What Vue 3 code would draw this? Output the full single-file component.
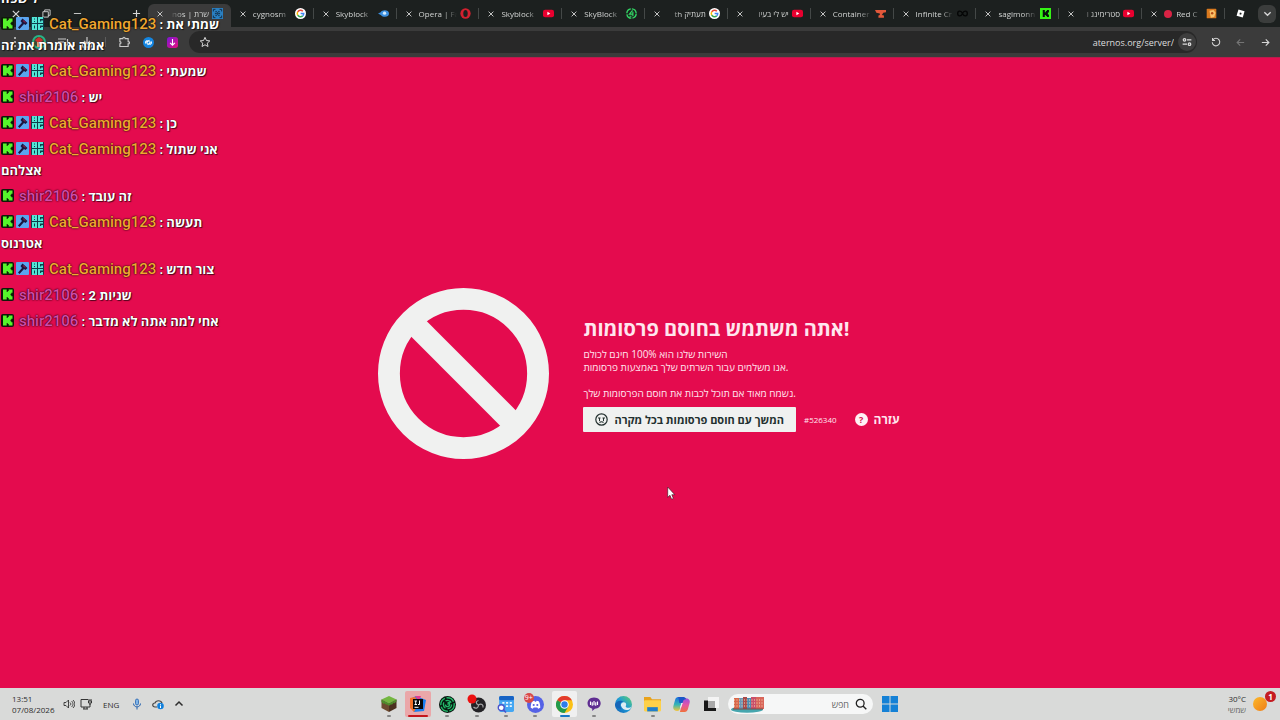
<template>
    <div class="desktop">
        <svg class="sprite" aria-hidden="true">
            <defs>
                <linearGradient id="g-copilot" x1="0" y1="0" x2="0" y2="1">
                    <stop offset="0" stop-color="#1b6fe0" />
                    <stop offset=".55" stop-color="#35b6b4" />
                    <stop offset="1" stop-color="#f2c53c" />
                </linearGradient>
                <linearGradient id="g-copilot-2" x1="0" y1="0" x2="0" y2="1">
                    <stop offset="0" stop-color="#9a4fe0" />
                    <stop offset=".5" stop-color="#e455a4" />
                    <stop offset="1" stop-color="#f0703c" />
                </linearGradient>
                <linearGradient id="g-edge" x1="0" y1="1" x2="1" y2="0">
                    <stop offset="0" stop-color="#0f5fb5" />
                    <stop offset=".5" stop-color="#1f9ad6" />
                    <stop offset="1" stop-color="#5fd36a" />
                </linearGradient>
                <linearGradient id="g-purple" x1="0" y1="0" x2="1" y2="1">
                    <stop offset="0" stop-color="#7a16d8" />
                    <stop offset="1" stop-color="#e8107c" />
                </linearGradient>
                <linearGradient id="g-sun" x1="0" y1="0" x2="1" y2="1">
                    <stop offset="0" stop-color="#fcb92c" />
                    <stop offset="1" stop-color="#ef7d17" />
                </linearGradient>
            </defs>
            <symbol id="i-aternos" viewBox="0 0 16 16">
                <rect width="16" height="16" fill="#2a7fc0" />
                <path d="M2 5V2h3M11 2h3v3M14 11v3h-3M5 14H2v-3M5 5h2M9 5h2M5 11h2M9 11h2M5 7v2M11 7v2M7 7h2v2H7z" fill="none" stroke="#12304a" stroke-width="1.4" />
            </symbol>
            <symbol id="i-google" viewBox="0 0 16 16">
                <circle cx="8" cy="8" r="8" fill="#fff" />
                <g fill="none" stroke-width="2.2">
                    <path d="M11.4 4.700A4.700 4.700 0 0 0 3.900 5.700" stroke="#ea4335" />
                    <path d="M3.900 5.700a4.700 4.700 0 0 0 0 4.600" stroke="#fbbc05" />
                    <path d="M3.900 10.300a4.700 4.700 0 0 0 7.300 1.100" stroke="#34a853" />
                    <path d="M11.200 11.400A4.700 4.700 0 0 0 12.700 8H8.200" stroke="#4285f4" />
                </g>
            </symbol>
            <symbol id="i-fish" viewBox="0 0 16 16">
                <path d="M0 8l4-2c2-4 12-4 12 2s-9 6-12 2z" fill="#3b8fdf" />
                <circle cx="9.500" cy="7.500" r="2.400" fill="#d4ecff" />
            </symbol>
            <symbol id="i-opera" viewBox="0 0 16 16">
                <ellipse cx="8" cy="8" rx="7.500" ry="7.500" fill="#d3202f" />
                <ellipse cx="8" cy="8" rx="3.200" ry="5.200" fill="#1c201f" />
            </symbol>
            <symbol id="i-youtube" viewBox="0 0 16 16">
                <rect y="2.400" width="16" height="11.200" rx="3" fill="#e8002f" />
                <path d="M6.400 5.600v4.800L10.600 8z" fill="#fff" />
            </symbol>
            <symbol id="i-hypixel" viewBox="0 0 16 16">
                <circle cx="8" cy="8" r="6.800" fill="none" stroke="#32d765" stroke-width="2" stroke-dasharray="9 1.600" />
                <path d="M9.500 3.500L5 9h5M10 5.500v6.500M5 12h3" fill="none" stroke="#32d765" stroke-width="1.700" />
            </symbol>
            <symbol id="i-anvil" viewBox="0 0 16 16">
                <path d="M0 3h16v3l-4 1-2 3 3 1v3H5v-3l2-1V8L2 7z" fill="#e2573a" />
            </symbol>
            <symbol id="i-loop" viewBox="0 0 16 16">
                <path d="M8 8c-2-5-7-4-7 0s5 5 7 0 7-4 7 0-5 5-7 0z" fill="none" stroke="#050606" stroke-width="2" />
            </symbol>
            <symbol id="i-kick" viewBox="0 0 16 16">
                <rect width="16" height="16" fill="#35f315" />
                <path d="M4 3h3v3h1.500V4.500H10V3h3v3.500h-1.500V9.500H13V13h-3v-1.500H8.500V10H7v3H4z" fill="#07120a" />
            </symbol>
            <symbol id="i-cookie" viewBox="0 0 16 16">
                <rect x="1" y="1" width="14" height="14" rx="1" fill="#d9791e" />
                <path d="M5 4l6-1 3 4-2 6-5 1z" fill="#f9c169" />
                <circle cx="9" cy="7.500" r="1.800" fill="#b64d16" />
            </symbol>
            <symbol id="i-roblox" viewBox="0 0 16 16">
                <path d="M4.400 1l10.800 3.200L12 15 1 11.800z" fill="#fff" />
                <path d="M7 6.200l3 .9-.9 3-3-.9z" fill="#1c201f" />
            </symbol>
            <symbol id="i-puzzle" viewBox="0 0 16 16">
                <path d="M2.500 3.500h4c0-2.400 3-2.400 3 0h4v4c2.400 0 2.400 3 0 3v3.500h-11v-3.500c2 0 2-3 0-3z" fill="none" stroke="#c9c9c9" stroke-width="1.500" />
            </symbol>
            <symbol id="i-shazam" viewBox="0 0 16 16">
                <circle cx="8" cy="8" r="8" fill="#1485e0" />
                <path d="M9.500 4.500L6.500 6.500c-2 1.500 0 3 1 2.500M6.500 11.500l3-2c2-1.500 0-3-1-2.500M4.500 9.500c-2-2 0-4 2-4.500M11.500 6.500c2 2 0 4-2 4.500" fill="none" stroke="#fff" stroke-width="1.500" />
            </symbol>
            <symbol id="i-save" viewBox="0 0 16 16">
                <rect width="16" height="16" rx="4" fill="url(#g-purple)" />
                <path d="M8 3v9M4.500 8.500L8 12l3.500-3.500" fill="none" stroke="#fff" stroke-width="1.600" />
            </symbol>
            <symbol id="i-star" viewBox="0 0 16 16">
                <path d="M8 1.800l1.900 4.200 4.500.5-3.400 3 1 4.500L8 11.700 4 14l1-4.500-3.400-3 4.500-.5z" fill="none" stroke="#d8d8d8" stroke-width="1.300" />
            </symbol>
            <symbol id="i-tune" viewBox="0 0 16 16">
                <g fill="none" stroke="#dcdcdc" stroke-width="2">
                    <circle cx="4" cy="4.500" r="2" />
                    <circle cx="12" cy="11.500" r="2" />
                    <path d="M8 4.500h7M1 11.500h7" />
                </g>
            </symbol>
            <symbol id="i-reload" viewBox="0 0 16 16">
                <path d="M3.200 4.500A6 6 0 1 1 2 8.500M2.500 1.500v4h4" fill="none" stroke="#d6d6d6" stroke-width="1.700" />
            </symbol>
            <symbol id="i-arrow" viewBox="0 0 16 16">
                <path d="M1.500 8h12.500M8.500 2.500L14 8l-5.500 5.500" fill="none" stroke="currentColor" stroke-width="2" />
            </symbol>
            <symbol id="i-x" viewBox="0 0 10 10">
                <path d="M1 1l8 8M9 1L1 9" fill="none" stroke="currentColor" stroke-width="1.500" />
            </symbol>
            <symbol id="i-chevron" viewBox="0 0 10 10">
                <path d="M1.500 3.500L5 7l3.500-3.500" fill="none" stroke="currentColor" stroke-width="1.500" />
            </symbol>

            <!-- chat badges -->
            <symbol id="b-kick" viewBox="0 0 13 13">
                <rect width="13" height="13" rx="2" fill="#0d1a08" />
                <path d="M2 1.500h3.700v2.500h1V3h1V1.500H11.500v3.300h-1.200v1H9.500v1.400h.8v1h1.200v3.300H7.700V10h-1V9h-1v2.500H2z" fill="#57f52b" />
            </symbol>
            <symbol id="b-mod" viewBox="0 0 13 13">
                <rect width="13" height="13" rx="1" fill="#5aa5ef" />
                <path d="M6.500 1.500l5 4.500-2 2-1.500-1-4.500 5L2 10.500 6 6 4.500 4z" fill="#1c1740" />
                <path d="M7 3.500l2.500 2" stroke="#7c1e4c" stroke-width="1.200" />
            </symbol>
            <symbol id="b-og" viewBox="0 0 13 13">
                <rect width="13" height="13" rx="1" fill="#0f3d4c" />
                <path d="M1 0h5v6H1zM3 1.500v1h1v-1zM3 4v1h1V4zM7 0h5v2H9v2.500h1.200v-1H12V6H7zM1 7h5v6H1zM3 8.500v3h1v-3zM7 7h5v1.500H9V11h1.200v-1H12v3H7z" fill="#52e6d6" fill-rule="evenodd" />
            </symbol>

            <!-- taskbar apps -->
            <symbol id="a-minecraft" viewBox="0 0 16 16">
                <path d="M8 0l7.500 3.500L8 7.500.5 3.500z" fill="#74b741" />
                <path d="M.5 3.500L8 7.500V16L.5 12z" fill="#6d4a30" />
                <path d="M15.500 3.500L8 7.500V16l7.500-4z" fill="#4b3020" />
                <path d="M.5 3.500L8 7.500v2.300L5.500 8v1L3 7v1.200L.5 6zM15.500 3.500L8 7.500v2.300L10.500 8v1L13 6.500v1l2.500-2z" fill="#4d8d2b" />
            </symbol>
            <symbol id="a-idea" viewBox="0 0 16 16">
                <path d="M0 3l6-3 10 4-2 11-10 1-4-6z" fill="#1a7ff0" />
                <path d="M0 2l5-1 4 5-5 10-4-4z" fill="#f5722b" />
                <path d="M5 0h6L9 5z" fill="#e53a95" />
                <rect x="3" y="3" width="10" height="10" fill="#0a0a0a" />
                <path d="M4.500 5H7M5.700 5v3.500M4.500 8.500H7M9.500 4.500v4H8M4.500 11.300h4" fill="none" stroke="#fff" stroke-width="1" />
            </symbol>
            <symbol id="a-radar" viewBox="0 0 16 16">
                <circle cx="8" cy="8" r="8" fill="#06170f" />
                <g fill="none" stroke="#23b768" stroke-width="1.300">
                    <circle cx="8" cy="8" r="6.300" stroke-dasharray="8 1.500" />
                    <circle cx="8" cy="8" r="3.900" stroke-dasharray="6 2" />
                    <path d="M8 8l3-3M6 8a2 2 0 1 0 2-2" />
                </g>
            </symbol>
            <symbol id="a-obs" viewBox="0 0 20 20">
                <circle cx="11.500" cy="11" r="7.500" fill="#242326" />
                <path d="M11.500 11c-3-1-3-4 0-4.500M11.500 11c3-2 5 0 4.500 2.500M11.500 11c0 3.500-3 4-5 2" fill="none" stroke="#a7a7a9" stroke-width="1.200" />
                <circle cx="5" cy="5" r="4.500" fill="#ec1010" />
            </symbol>
            <symbol id="a-calendar" viewBox="0 0 16 16">
                <rect x="2" width="14" height="15" rx="1.500" fill="#44a7f3" />
                <rect x="2" width="14" height="4" rx="1.500" fill="#1763c4" />
                <path d="M5 6.500h2M8.500 6.500h2M12 6.500h2M8.500 9.500h2M12 9.500h2" stroke="#e9f6ff" stroke-width="1.700" />
                <circle cx="4" cy="11" r="2.800" fill="#fff" stroke="#4a55cc" stroke-width="1.300" />
                <path d="M6 13l2.500 2.500" stroke="#4a55cc" stroke-width="1.500" />
            </symbol>
            <symbol id="a-discord" viewBox="0 0 16 16">
                <circle cx="8" cy="8" r="8" fill="#5562e6" />
                <path d="M3.500 11c0-3 .7-5 1.500-6l2-.5.5.8h1l.5-.8 2 .5c.8 1 1.500 3 1.500 6l-2 1-.8-1.200H6.300L5.500 12z" fill="#fff" />
                <circle cx="6.300" cy="8.500" r="1" fill="#5562e6" />
                <circle cx="9.700" cy="8.500" r="1" fill="#5562e6" />
            </symbol>
            <symbol id="a-chrome" viewBox="0 0 16 16">
                <circle cx="8" cy="8" r="8" fill="#fbc116" />
                <path d="M8 8L1.070 4A8 8 0 0 1 14.930 4z" fill="#e33b2e" />
                <path d="M8 8L1.070 4A8 8 0 0 0 8 16l3.500-6z" fill="#229a4c" />
                <path d="M8 4h6.930L11.500 10z" fill="#fbc116" />
                <circle cx="8" cy="8" r="4" fill="#fff" />
                <circle cx="8" cy="8" r="3" fill="#2f7de9" />
            </symbol>
            <symbol id="a-voice" viewBox="0 0 16 16">
                <path d="M8 .5c10 0 10 13 1 13L6 16v-2.700C-2 12-1 .5 8 .5z" fill="#5f2d91" />
                <path d="M4 5v4M6 6v4M8 4.500v5M10 6v4M12 5v4" stroke="#fff" stroke-width="1.300" />
            </symbol>
            <symbol id="a-edge" viewBox="0 0 16 16">
                <circle cx="8" cy="8" r="8" fill="url(#g-edge)" />
                <path d="M5.500 9c0-4 5-4 5-1 0 1.500-1 1.500 0 2.500 1.500 1 4 .5 5-.5-1 4-8 5-10-1z" fill="#dcecf4" />
                <path d="M0 8c1-4 6-4.500 8-2.500-3 0-4 3-2 6.500-3 0-6-1-6-4z" fill="#1566b8" />
            </symbol>
            <symbol id="a-folder" viewBox="0 0 16 16">
                <path d="M0 1h6l1.500 2H16v10H0z" fill="#e9a21b" />
                <rect y="4" width="16" height="10.500" rx="1" fill="#fdd14a" />
                <path d="M3 14.500v-4h10v4z" fill="#1f7fcb" />
            </symbol>
            <symbol id="a-copilot" viewBox="0 0 16 16">
                <path d="M5 1h4.500L6.500 12c-.5 1.500-1 2-2.500 2-3 0-4.500-2-3.500-5L2 3.500C2.500 2 3.500 1 5 1z" fill="url(#g-copilot)" />
                <path d="M11 15H6.500l3-11c.5-1.500 1-2 2.500-2 3 0 4.500 2 3.500 5L14 12.500c-.5 1.500-1.500 2.500-3 2.500z" fill="url(#g-copilot-2)" />
                <path d="M5 1h5c1.300 0 2 1 2.300 2-1.500 0-2.300.5-2.800 2L9 6.500H6z" fill="#1c56c8" />
                <path d="M9.200 6.500L7.500 11h-1L8 6.500z" fill="#eef2f5" />
            </symbol>
            <symbol id="a-taskview" viewBox="0 0 16 16">
                <rect x="5" y="1" width="11" height="11" fill="#f4f4f4" />
                <path d="M1 4.500h4V12h8v3H1z" fill="#171717" />
                <rect x="5" y="5" width="7" height="7" fill="#a9a9a9" />
            </symbol>
            <symbol id="a-windows" viewBox="0 0 16 16">
                <path d="M0 0h7.500v7.500H0zM8.500 0H16v7.500H8.500zM0 8.500h7.500V16H0zM8.500 8.500H16V16H8.500z" fill="#1581d6" />
            </symbol>
        </svg>

        <header class="browser">
            <div class="tab-strip">
                <div class="window-buttons">
                    <button aria-label="Close window"><svg width="8" height="8"><use href="#i-x" /></svg></button>
                    <button aria-label="Restore"><svg width="9" height="9" viewBox="0 0 10 10"><path d="M1 3h6v6H1zM3 3V1h6v6H7" fill="none" stroke="currentColor" /></svg></button>
                    <button aria-label="Minimize"><svg width="9" height="9" viewBox="0 0 10 10"><path d="M1 5h8" stroke="currentColor" /></svg></button>
                </div>
                <button class="new-tab" aria-label="New tab"><svg width="9" height="9" viewBox="0 0 10 10"><path d="M5 1v8M1 5h8" stroke="currentColor" stroke-width="1.300" /></svg></button>
                <nav class="tabs">
                    <div v-for="(tab, i) in tabs" :key="i" class="tab" :class="{ active: i === 0, hebrew: tab.rtl }">
                        <button class="tab-close" aria-label="Close tab"><svg width="6" height="6"><use href="#i-x" /></svg></button>
                        <span class="tab-title" :dir="tab.rtl ? 'rtl' : 'ltr'"><i v-if="tab.dot" class="dot"></i>{{ tab.title }}</span>
                        <svg class="favicon"><use :href="'#i-' + tab.icon" /></svg>
                    </div>
                </nav>
                <svg class="pinned"><use href="#i-roblox" /></svg>
                <button class="tab-search" aria-label="Search tabs"><svg width="9" height="9"><use href="#i-chevron" /></svg></button>
            </div>
            <div class="toolbar">
                <div class="tools">
                    <button aria-label="Menu"><svg width="12" height="12" viewBox="0 0 12 12"><path d="M6 1v2M6 5v2M6 9v2" stroke="#d0d0d0" stroke-width="1.500" /></svg></button>
                    <button aria-label="Profile"><svg width="14" height="14" viewBox="0 0 14 14"><circle cx="7" cy="7" r="7" fill="#28b487" /><circle cx="7" cy="7" r="5" fill="#3b4a35" /><path d="M3 5l4-3 4 3-2 2H5z" fill="#cf3030" /><path d="M5 7h4v5H5z" fill="#e0a070" /></svg></button>
                    <button aria-label="Media"><svg width="12" height="12" viewBox="0 0 12 12"><path d="M1 3h8M1 6h6M1 9h4M10.500 3v6" fill="none" stroke="#c9c9c9" stroke-width="1.200" /><circle cx="9.500" cy="9" r="1.300" fill="#c9c9c9" /></svg></button>
                    <button aria-label="Downloads"><svg width="12" height="12" viewBox="0 0 12 12"><path d="M6 1v7M3 5l3 3 3-3M1.500 8v3h9V8" fill="none" stroke="#c9c9c9" stroke-width="1.200" /></svg></button>
                    <span class="tool-line"></span>
                    <button aria-label="Extensions"><svg width="12" height="12"><use href="#i-puzzle" /></svg></button>
                    <button aria-label="Shazam"><svg width="11" height="11"><use href="#i-shazam" /></svg></button>
                    <button aria-label="Download video"><svg width="11" height="11"><use href="#i-save" /></svg></button>
                </div>
                <div class="address">
                    <button aria-label="Bookmark"><svg width="12" height="12"><use href="#i-star" /></svg></button>
                    <input v-model="url" type="text" aria-label="Address">
                    <button class="site-info" aria-label="Site information"><svg width="10" height="10"><use href="#i-tune" /></svg></button>
                </div>
                <div class="history">
                    <button aria-label="Reload"><svg width="10" height="10"><use href="#i-reload" /></svg></button>
                    <button class="dim" aria-label="Forward"><svg class="flip" width="9" height="9"><use href="#i-arrow" /></svg></button>
                    <button aria-label="Back"><svg width="9" height="9"><use href="#i-arrow" /></svg></button>
                </div>
            </div>
        </header>

        <main class="page">
            <svg class="ban" viewBox="0 0 172 172" aria-hidden="true">
                <circle cx="86" cy="86" r="75" fill="none" stroke="#f0f1f0" stroke-width="22" />
                <path d="M33 33l106 106" stroke="#f0f1f0" stroke-width="22" />
            </svg>
            <section class="notice">
                <h1>אתה משתמש בחוסם פרסומות!</h1>
                <p>השירות שלנו הוא 100% חינם לכולם<br>אנו משלמים עבור השרתים שלך באמצעות פרסומות.</p>
                <p>נשמח מאוד אם תוכל לכבות את חוסם הפרסומות שלך.</p>
                <div class="actions">
                    <button class="continue">
                        <svg width="13" height="13" viewBox="0 0 13 13"><g fill="none" stroke="#23302f" stroke-width="1.200"><circle cx="6.500" cy="6.500" r="5.700" /><path d="M4.500 9.500c1-1 3-1 4 0M3 5h2.500M7.500 5h2.500" /></g><path d="M4 5h1v3H4zM8 5h1v3H8z" fill="#23302f" /></svg>
                        <span>המשך עם חוסם פרסומות בכל מקרה</span>
                    </button>
                    <span class="code">#526340</span>
                    <a class="help" href="#help"><span class="mark">?</span><span>עזרה</span></a>
                </div>
            </section>
            <svg class="pointer" viewBox="0 0 9 14" aria-hidden="true">
                <path d="M.7 1v10.300l2.300-2 1.600 3.900 1.800-.8-1.600-3.700h3z" fill="#fff" stroke="#35101d" stroke-width=".6" />
            </svg>
        </main>

        <footer class="taskbar">
            <div class="tray">
                <div class="clock"><span>13:51</span><span>07/08/2026</span></div>
                <svg width="12" height="12" viewBox="0 0 12 12"><path d="M1 4.500h2L5.500 2v8L3 7.500H1zM7 4.500c1 1 1 2 0 3M8.500 3c2 2 2 4 0 6M10 2c2.500 2.500 2.500 5.500 0 8" fill="none" stroke="#333" stroke-width=".9" /></svg>
                <svg class="net" width="12" height="12" viewBox="0 0 12 12"><path d="M8 1.500H1v7.500h9V6M3 11h5M4 9v2M7 9v2M9 1v2M11 1v2M8.500 3h3v2h-3zM10 5v2" fill="none" stroke="#333" stroke-width="1" /></svg>
                <span class="lang">ENG</span>
                <svg class="mic" width="10" height="12" viewBox="0 0 10 12"><rect x="3.500" y="1" width="3" height="6" rx="1.500" fill="#7fb4e8" stroke="#2563b0" stroke-width=".8" /><path d="M1.500 5.500c0 4.500 7 4.500 7 0M5 9v2.500" fill="none" stroke="#2563b0" /></svg>
                <svg class="cloud" width="12" height="12" viewBox="0 0 12 12"><path d="M5 9H3C0 9 0 5 3 5c1-3 6-3 7 0" fill="none" stroke="#444" stroke-width="1.200" /><circle cx="8.500" cy="8" r="3.300" fill="#1180dc" /><path d="M8.500 6v.8M8.500 7.500V10" stroke="#fff" /></svg>
                <svg class="more" width="10" height="10"><use href="#i-chevron" /></svg>
            </div>
            <div class="dock">
                <div class="apps">
                    <button v-for="app in apps" :key="app.icon" class="app" :class="app.state" :aria-label="app.icon">
                        <svg class="app-icon" :width="app.size || 17" :height="app.size || 17"><use :href="'#a-' + app.icon" /></svg>
                        <span v-if="app.badge" class="count" v-text="app.badge"></span>
                    </button>
                </div>
                <label class="search">
                    <svg class="houses" viewBox="0 0 36 18" aria-hidden="true">
                        <ellipse cx="18" cy="14.500" rx="16" ry="3.200" fill="#46a6ae" />
                        <path d="M5 3h5v11H5z" fill="#d8674a" /><path d="M10 3h4v11h-4z" fill="#6c96b5" /><path d="M14 2h4v12h-4z" fill="#a84a4a" />
                        <path d="M18 3h4v11h-4z" fill="#4d8db3" /><path d="M22 2h5v12h-5z" fill="#c9506a" /><path d="M27 2h8v12h-8z" fill="#d9665a" />
                        <path d="M5 5h30M5 8h30M5 11h30" stroke="#f4d9b8" stroke-width="1" stroke-dasharray="1 1.500" />
                        <path d="M4 14h30" stroke="#704a48" stroke-width="1" />
                    </svg>
                    <input type="text" dir="rtl" placeholder="חפש" aria-label="חפש">
                    <svg width="12" height="12" viewBox="0 0 12 12"><circle cx="5.200" cy="5.200" r="3.900" fill="none" stroke="#222" stroke-width="1.300" /><path d="M8 8l3.300 3.300" stroke="#222" stroke-width="1.400" /></svg>
                </label>
                <button class="start" aria-label="Start"><svg width="16" height="16"><use href="#a-windows" /></svg></button>
            </div>
            <div class="weather">
                <div class="forecast"><span>30°C</span><span class="sky">שמשי</span></div>
                <svg width="24" height="20" viewBox="0 0 24 20"><circle cx="8" cy="10" r="7" fill="url(#g-sun)" /></svg>
                <span class="alert">1</span>
            </div>
        </footer>

        <aside class="chat">
            <p v-for="(msg, i) in messages" :key="i" class="message">
                <template v-if="msg.user">
                    <span class="badges">
                        <svg v-for="badge in users[msg.user].badges" :key="badge" width="13" height="13"><use :href="'#b-' + badge" /></svg>
                    </span>
                    <span class="name" :class="msg.user" v-text="users[msg.user].name"></span>
                    <span class="body" v-text="' : ' + msg.text"></span>
                </template>
                <span v-if="msg.rest" class="body rest" v-text="msg.rest"></span>
            </p>
        </aside>
    </div>
</template>



<script setup>
import { ref } from 'vue';

const url = ref('aternos.org/server/');

/* tabs */
const tabs = [
    { title: 'שרת | nos', icon: 'aternos', rtl: true },
    { title: 'cygnosm', icon: 'google' },
    { title: 'Skyblock', icon: 'fish' },
    { title: 'Opera | Fa', icon: 'opera' },
    { title: 'Skyblock', icon: 'youtube' },
    { title: 'SkyBlock', icon: 'hypixel' },
    { title: 'תעתיק th', icon: 'google', rtl: true },
    { title: 'יש לי בעיו', icon: 'youtube', rtl: true },
    { title: 'Container', icon: 'anvil' },
    { title: 'Infinite Cr', icon: 'loop' },
    { title: 'sagimonn', icon: 'kick' },
    { title: 'סטרימינג ו', icon: 'youtube', rtl: true },
    { title: 'Red C', icon: 'cookie', dot: true },
];

/* chat */
const users = {
    cat: { name: 'Cat_Gaming123', badges: ['kick', 'mod', 'og'] },
    shir: { name: 'shir2106', badges: ['kick'] },
};

const messages = [
    { rest: 'ל שפה' },
    { user: 'cat', text: 'שמתי את', rest: 'אמה אומרת את זה' },
    { user: 'cat', text: 'שמעתי' },
    { user: 'shir', text: 'יש' },
    { user: 'cat', text: 'כן' },
    { user: 'cat', text: 'אני שתול', rest: 'אצלהם' },
    { user: 'shir', text: 'זה עובד' },
    { user: 'cat', text: 'תעשה', rest: 'אטרנוס' },
    { user: 'cat', text: 'צור חדש' },
    { user: 'shir', text: '2 שניות' },
    { user: 'shir', text: 'אחי למה אתה לא מדבר' },
];

/* taskbar */
const apps = [
    { icon: 'minecraft', state: 'running', size: 16 },
    { icon: 'idea', state: 'alerting', size: 16 },
    { icon: 'radar', state: 'running' },
    { icon: 'obs', state: 'running', size: 20 },
    { icon: 'calendar', state: 'running' },
    { icon: 'discord', state: 'running', badge: '9+' },
    { icon: 'chrome', state: 'focused' },
    { icon: 'voice', state: 'running', size: 14 },
    { icon: 'edge' },
    { icon: 'folder', state: 'running' },
    { icon: 'copilot' },
    { icon: 'taskview', size: 16 },
];
</script>



<style>
body {
    margin: 0;
    background: #e40b4e;
}
</style>

<style scoped>
.desktop {
    position: relative;
    display: flex;
    flex-direction: column;
    min-height: 100vh;
    overflow: hidden;
    font-family: "Open Sans", "Noto Sans", sans-serif;
}

.sprite {
    position: absolute;
    width: 0;
    height: 0;
}

svg {
    display: block;
    flex: none;
}

button {
    display: flex;
    align-items: center;
    justify-content: center;
    padding: 0;
    border: 0;
    background: none;
    color: #d6d6d6;
    font: inherit;
}

input {
    min-width: 0;
    padding: 0;
    border: 0;
    outline: 0;
    background: none;
    font: inherit;
}

/* browser */
.tab-strip {
    display: flex;
    align-items: center;
    height: 27px;
    background: #1c201f;
}

.window-buttons {
    display: flex;
}

.window-buttons button {
    width: 31px;
    height: 27px;
}

.new-tab {
    width: 24px;
    margin-left: 31px;
}

.tabs {
    display: flex;
    flex: 1;
    min-width: 0;
    align-self: stretch;
    padding-top: 4px;
}

.tab {
    display: flex;
    flex: 1;
    align-items: center;
    min-width: 0;
    height: 11px;
    margin-top: 4px;
    padding: 0 7px 0 9px;
    border-right: 1px solid #444847;
    box-sizing: border-box;
}

.tab.active {
    height: 23px;
    margin: 0;
    padding-bottom: 4px;
    border-radius: 6px 6px 0 0;
    border-color: #3b3b3b;
    background: #3b3b3b;
}

.tab-close {
    width: 6px;
    margin-right: 7px;
}

.tab-title {
    flex: 1;
    min-width: 0;
    overflow: hidden;
    color: #d2d4d3;
    font-size: 8px;
    line-height: 12px;
    white-space: nowrap;
    mask-image: linear-gradient(to right, #000 65%, transparent);
}

.hebrew .tab-title {
    mask-image: linear-gradient(to left, #000 65%, transparent);
}

.dot {
    display: inline-block;
    width: 8px;
    height: 8px;
    margin-right: 4px;
    border-radius: 50%;
    background: #d92344;
    vertical-align: -1px;
}

.favicon {
    width: 11px;
    height: 11px;
    margin-left: 3px;
}

.pinned {
    width: 9px;
    height: 9px;
    margin: 0 13px 0 11px;
}

.tab-search {
    width: 18px;
    height: 18px;
    margin-right: 4px;
    border-radius: 6px;
    background: #3b3d3c;
}

.toolbar {
    display: flex;
    align-items: center;
    height: 30px;
    background: #3b3b3b;
}

.tools {
    display: flex;
    align-items: center;
    padding: 0 5px 0 3px;
}

.tools button {
    width: 24px;
}

.tool-line {
    width: 1px;
    height: 10px;
    margin: 0 6px;
    background: #5c5c5c;
}

.address {
    display: flex;
    flex: 1;
    align-items: center;
    height: 22px;
    padding: 0 1px 0 10px;
    border-radius: 11px;
    background: #282828;
}

.address input {
    flex: 1;
    margin: 0 4px;
    color: #dedede;
    font-size: 9px;
    text-align: right;
}

.site-info {
    width: 18px;
    height: 18px;
    border-radius: 9px;
    background: #3e3e3e;
}

.history {
    display: flex;
    padding: 0 2px 0 6px;
}

.history button {
    width: 25px;
}

.history .dim {
    color: #747474;
}

.flip {
    transform: scaleX(-1);
}

/* page */
.page {
    position: relative;
    display: flex;
    flex: 1;
    align-items: center;
    justify-content: center;
    gap: 34px;
    padding-right: 2px;
    border-top: 1px solid #b81c4c;
    background: #e40b4e;
    color: #ffe6ee;
}

.ban {
    width: 171px;
    height: 171px;
}

h1 {
    margin: 0 0 6px;
    font-size: 20px;
    line-height: 27px;
    font-weight: 700;
}

.notice p {
    margin: 0 0 13px;
    font-size: 10px;
    line-height: 13px;
}

.notice .actions {
    display: flex;
    align-items: center;
    margin-top: -6px;
}

.continue {
    gap: 6px;
    height: 25px;
    padding: 0 12px;
    border-radius: 1px;
    background: #f0f1f0;
    color: #23302f;
    font-size: 11px;
    font-weight: 700;
}

.code {
    margin: 0 18px 0 8px;
    font-size: 8px;
}

.help {
    display: flex;
    align-items: center;
    gap: 6px;
    color: #ffe6ee;
    font-size: 12px;
    font-weight: 700;
    text-decoration: none;
}

.mark {
    width: 13px;
    border-radius: 50%;
    background: #fff0f4;
    color: #d60d4b;
    font-size: 9px;
    line-height: 13px;
    text-align: center;
}

.pointer {
    position: absolute;
    top: 428px;
    left: 667px;
    width: 9px;
    height: 14px;
}

/* taskbar */
.taskbar {
    display: grid;
    grid-template-columns: 1fr auto 1fr;
    align-items: center;
    height: 32px;
    padding-right: 8px;
    background: #d9dad9;
    color: #2d2d2d;
    font-size: 8px;
    line-height: 11px;
}

.tray {
    display: flex;
    align-items: center;
    padding-left: 12px;
}

.clock {
    display: flex;
    flex-direction: column;
    width: 51px;
}

.net {
    margin-left: 5px;
}

.lang {
    margin: 0 13px 0 11px;
}

.cloud {
    margin: 0 10px;
}

.more {
    transform: rotate(180deg);
}

.dock {
    display: flex;
    align-items: center;
}

.apps {
    display: flex;
    width: 352px;
}

.app {
    position: relative;
    flex: 1;
    height: 32px;
}

.app-icon {
    position: relative;
}

/* tile behind the active app */
.alerting::before,
.focused::before {
    content: "";
    position: absolute;
    inset: 3px 2px;
    border-radius: 2px;
    background: #f0f0f0;
}

.alerting::before {
    background: #eaa7a9;
}

/* line under the open apps */
.running::after,
.alerting::after,
.focused::after {
    content: "";
    position: absolute;
    bottom: 3px;
    left: 50%;
    width: 4px;
    height: 2px;
    margin-left: -2px;
    border-radius: 1px;
    background: #858585;
}

.focused::after {
    width: 10px;
    margin-left: -5px;
    background: #1a76c6;
}

.alerting::after {
    width: 20px;
    margin-left: -10px;
    background: #c4161c;
}

.count {
    position: absolute;
    top: 5px;
    left: 3px;
    width: 10px;
    border-radius: 5px;
    background: #d94848;
    color: #fff;
    font-size: 7px;
    line-height: 10px;
}

.search {
    display: flex;
    align-items: center;
    width: 145px;
    height: 20px;
    box-sizing: border-box;
    margin: 0 9px 0 2px;
    padding: 0 6px 0 1px;
    border-radius: 10px;
    background: #f6f7f7;
}

.houses {
    width: 36px;
    height: 18px;
}

.search input {
    flex: 1;
    margin-right: 6px;
    font-size: 9px;
}

.search input::placeholder {
    color: #666;
    opacity: 1;
}

.weather {
    position: relative;
    display: flex;
    align-items: center;
    justify-content: flex-end;
    gap: 6px;
    margin-right: -4px;
}

.forecast {
    display: flex;
    flex-direction: column;
    align-items: flex-end;
}

.sky {
    color: #666;
}

.alert {
    position: absolute;
    top: -2px;
    right: 0;
    width: 11px;
    border-radius: 6px;
    background: #c41c22;
    color: #fff;
    font-weight: 700;
    text-align: center;
}

/* chat over the browser */
.chat {
    position: absolute;
    top: 0;
    left: 1px;
    display: flex;
    flex-direction: column;
    justify-content: flex-end;
    gap: 5px;
    width: 240px;
    height: 332px;
    overflow: hidden;
    pointer-events: none;
}

.message {
    flex: none;
    margin: 0;
    color: #fff;
    font-family: Roboto, "Open Sans", sans-serif;
    font-size: 15px;
    line-height: 21px;
    text-shadow: 0 0 1px #000, 1px 1px 1px rgba(0, 0, 0, .6);
}

.badges {
    display: inline-flex;
    gap: 2px;
    margin-right: 5px;
    vertical-align: -1px;
}

.name {
    font-weight: 500;
    text-shadow: 0 0 2px #000, 0 0 1px rgba(0, 0, 0, .6);
}

.cat {
    color: #f0a830;
}

.shir {
    color: #d24bab;
}

.body {
    font-size: 13px;
    font-weight: 700;
    white-space: pre;
}

.rest {
    display: block;
}
</style>
